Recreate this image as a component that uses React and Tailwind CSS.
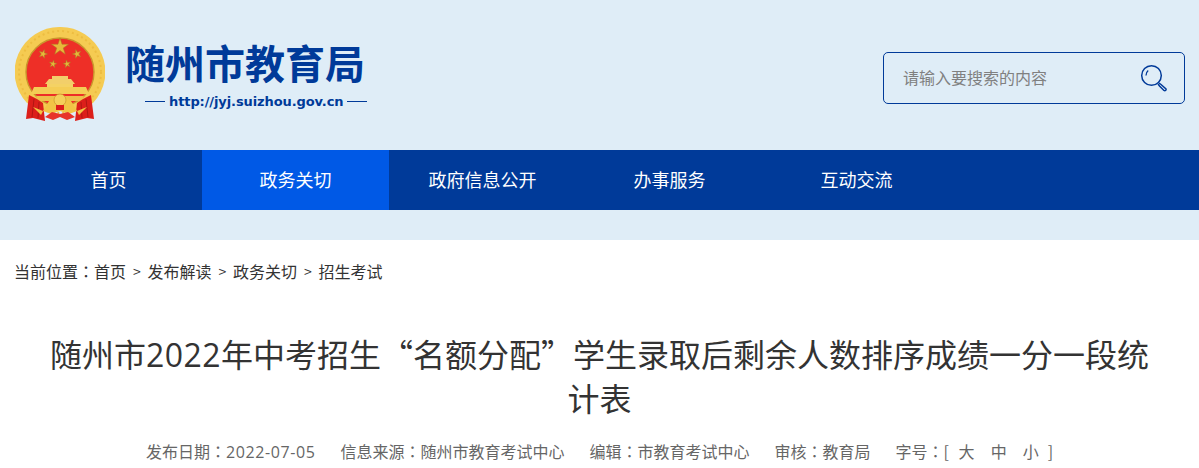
import React from 'react';

const NAV_ITEMS = ['首页', '政务关切', '政府信息公开', '办事服务', '互动交流'];
const CRUMBS = ['首页', '发布解读', '政务关切', '招生考试'];
const META = [
  { label: '信息来源', value: '随州市教育考试中心' },
  { label: '编辑', value: '市教育考试中心' },
  { label: '审核', value: '教育局' },
];

// the colon sits in the middle of its box in the reference, the TC cut does that
const Colon = () => <span className="font-['Noto_Sans_CJK_TC',sans-serif]">：</span>;

const Star = ({ x, y, r, rot = 0 }) => {
  const points = [];
  for (let i = 0; i < 10; i++) {
    const radius = i % 2 === 0 ? r : r * 0.38;
    const angle = (Math.PI / 5) * i - Math.PI / 2 + rot;
    points.push(`${x + radius * Math.cos(angle)},${y + radius * Math.sin(angle)}`);
  }
  return <polygon points={points.join(' ')} fill="#e8b83a" stroke="#a87a24" strokeWidth="0.5" />;
};

const Emblem = () => (
  <svg width="90" height="94" viewBox="0 0 90 94" className="block">
    {/* wreath */}
    <path d="M45 0 A45 45 0 0 1 78 76 L60 84 H30 L12 76 A45 45 0 0 1 45 0 Z" fill="#f5cb52" />
    <circle cx="45" cy="45" r="41" fill="none" stroke="#edbd41" strokeWidth="2" strokeDasharray="2 3" />
    <circle cx="45" cy="45" r="34" fill="#ee2f27" stroke="#c9962c" strokeWidth="1.4" />
    <Star x={45} y={20} r={9} />
    <Star x={28} y={27} r={4.6} rot={0.3} />
    <Star x={62} y={27} r={4.6} rot={-0.3} />
    <Star x={38} y={37} r={4} rot={0.2} />
    <Star x={52} y={37} r={4} rot={-0.2} />
    {/* gate */}
    <path d="M37 49 h16 v3 h3 l4 5 H30 l4 -5 h3 z" fill="#f2cf6a" />
    <rect x="32" y="57" width="26" height="3" fill="#f4d264" />
    <path d="M19 60 H71 L74 67 H16 Z" fill="#f4cd55" />
    <path d="M21 69 H69 L66 74 H24 Z" fill="#eec04a" />
    {/* ribbons */}
    <path d="M14 68 L22 72 L28 76 L30 94 L18 91 L11 92 Z" fill="#dc1f1a" />
    <path d="M76 68 L68 72 L62 76 L60 94 L72 91 L79 92 Z" fill="#dc1f1a" />
    <path d="M19 72 L17 90 M24 75 L23 91 M71 72 L73 90 M66 75 L67 91" stroke="#b01713" strokeWidth="1" />
    {/* knot */}
    <path d="M28 84 L34 74 L45 68 L56 74 L62 84 L54 87 L45 84 L36 87 Z" fill="#f2c545" />
    <circle cx="45" cy="73" r="6" fill="#f5d05a" stroke="#c9962c" strokeWidth="0.7" />
    <rect x="41" y="78" width="8" height="5" fill="#dc1f1a" />
    <path d="M30 90 L37 85 L45 87 L53 85 L60 90 L52 93 L45 90 L38 93 Z" fill="#e7332a" />
    <path d="M28 84 L18 80 L26 88 Z M62 84 L72 80 L64 88 Z" fill="#f2c545" />
  </svg>
);

const SearchIcon = () => (
  <svg width="28" height="28" viewBox="0 0 28 28" fill="none" stroke="#003a99" className="block">
    <circle cx="11.5" cy="11.5" r="9.8" strokeWidth="1.5" />
    <path d="M6 11.5 C6 9 7 7.5 8.2 6.5" strokeWidth="1.3" />
    <path d="M19 19 L21 20.5 L26 25 A1.3 1.3 0 0 1 24 26.5 L19.5 22 L18 20" strokeWidth="1.5" />
  </svg>
);

export default function App() {
  return (
    <div className="h-[468px] overflow-hidden bg-white font-['Noto_Sans_CJK_SC',sans-serif]">
      <header className="h-[150px] bg-[#dfedf7] flex items-center justify-between pl-[15px] pr-[14px]">
        <div className="flex items-start mt-[-3px]">
          <Emblem />
          <div className="ml-[20px] mt-[8px] flex flex-col">
            <div className="text-[40px] leading-[54px] font-bold text-[#003a99] whitespace-nowrap">随州市教育局</div>
            <div className="flex items-center ml-[20px] mt-[4px] gap-[4px] text-[#003a99]">
              <span className="w-[20px] h-px bg-[#003a99]"></span>
              <span className="text-[13px] leading-[18px] font-bold font-['DejaVu_Sans',sans-serif] tracking-[-0.1px] whitespace-nowrap">http://jyj.suizhou.gov.cn</span>
              <span className="w-[20px] h-px bg-[#003a99]"></span>
            </div>
          </div>
        </div>
        <div className="w-[302px] h-[52px] border border-[#003a99] rounded-[5px] flex items-center justify-between pl-[19px] pr-[16px] mt-[6px]">
          <span className="text-[16px] text-[#808080] mt-[-3px]">请输入要搜索的内容</span>
          <SearchIcon />
        </div>
      </header>

      <nav className="h-[60px] bg-[#003a99] flex pl-[15px]">
        {NAV_ITEMS.map((item, i) => (
          <a key={item} className={`w-[187px] pb-[1px] flex items-center justify-center text-[18px] text-white ${i === 1 ? 'bg-[#0059e6]' : ''}`}>
            {item}
          </a>
        ))}
      </nav>
      <div className="h-[30px] bg-[#dfedf7]"></div>

      <div className="pl-[14px] pt-[19px] flex items-center text-[16px] leading-[24px] text-[#333333] whitespace-nowrap">
        <span>当前位置<Colon /></span>
        {CRUMBS.map((crumb, i) => (
          <React.Fragment key={crumb}>
            {i > 0 && <span className="w-[21.5px] text-center text-[14px]">&gt;</span>}
            <span>{crumb}</span>
          </React.Fragment>
        ))}
      </div>

      <h1 className="mt-[49px] mx-[44px] text-center text-[32px] leading-[42px] font-normal text-[#333333]">
        随州市<span className="font-['Open_Sans',sans-serif] tracking-[0.5px]">2022</span>年中考招生“名额分配”学生录取后剩余人数排序成绩一分一段统计表
      </h1>

      <div className="mt-[21px] flex justify-center gap-[25px] text-[16px] leading-[24px] text-[#666666] whitespace-nowrap">
        <span>发布日期<Colon /><span className="font-['Open_Sans',sans-serif] tracking-[0.6px]">2022-07-05</span></span>
        {META.map((item) => (
          <span key={item.label}>{item.label}<Colon />{item.value}</span>
        ))}
        <span className="flex">
          字号<Colon />
          <span className="w-[15px]">[</span>
          <span>大</span>
          <span className="ml-[16px]">中</span>
          <span className="ml-[16px]">小</span>
          <span className="ml-[9px]">]</span>
        </span>
      </div>
    </div>
  );
}
